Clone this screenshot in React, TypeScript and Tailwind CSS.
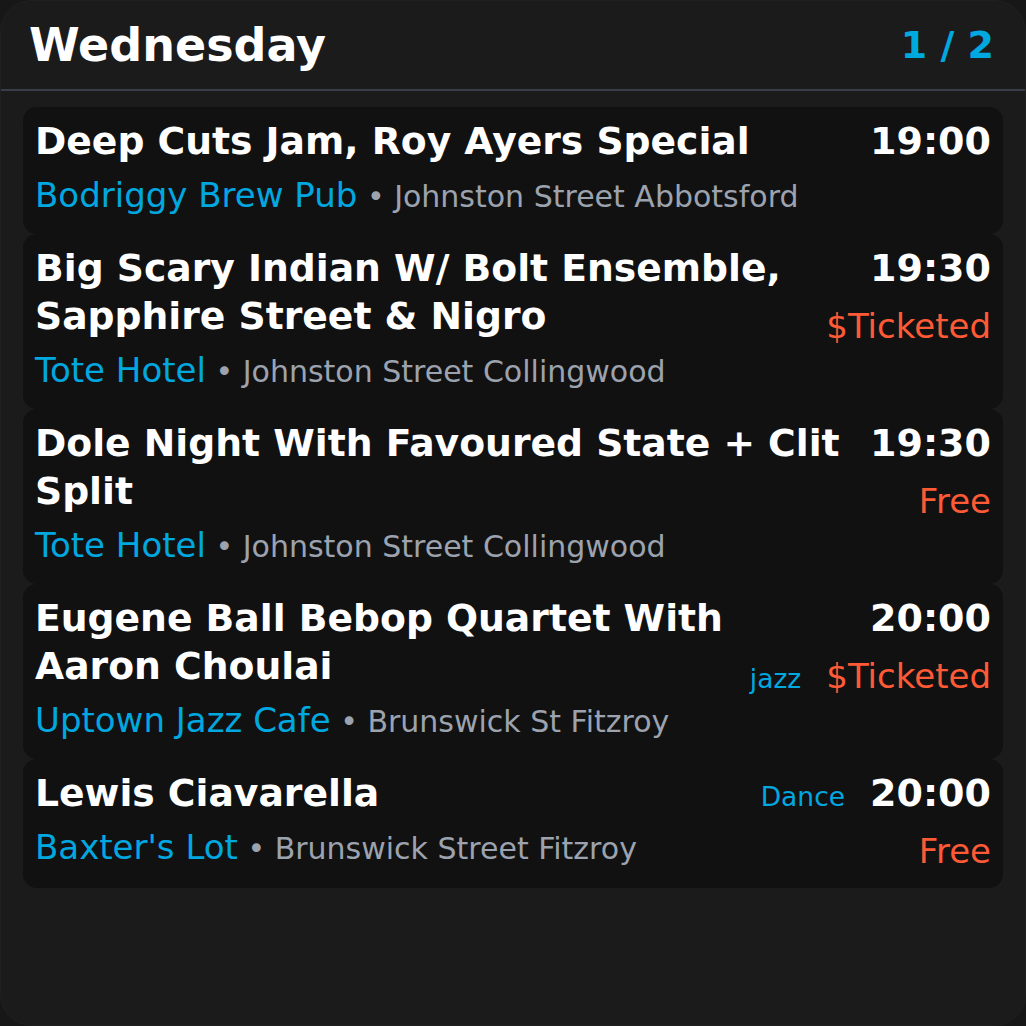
import React from "react";

type Ev = {
  title: string;
  venue: string;
  addr: string;
  time: string;
  price?: string;
  tag?: string;
  tagRow?: "time" | "price";
};

const events: Ev[] = [
  { title: "Deep Cuts Jam, Roy Ayers Special", venue: "Bodriggy Brew Pub", addr: "Johnston Street Abbotsford", time: "19:00" },
  { title: "Big Scary Indian W/ Bolt Ensemble, Sapphire Street & Nigro", venue: "Tote Hotel", addr: "Johnston Street Collingwood", time: "19:30", price: "$Ticketed" },
  { title: "Dole Night With Favoured State + Clit Split", venue: "Tote Hotel", addr: "Johnston Street Collingwood", time: "19:30", price: "Free" },
  { title: "Eugene Ball Bebop Quartet With Aaron Choulai", venue: "Uptown Jazz Cafe", addr: "Brunswick St Fitzroy", time: "20:00", price: "$Ticketed", tag: "jazz", tagRow: "price" },
  { title: "Lewis Ciavarella", venue: "Baxter's Lot", addr: "Brunswick Street Fitzroy", time: "20:00", price: "Free", tag: "Dance", tagRow: "time" },
];

function Card({ e }: { e: Ev }) {
  return (
    <div className="flex justify-between rounded-[14px] bg-[#111111] pl-[12px] pr-[12px] pt-[10px] pb-[17px]">
      <div className="flex min-w-0 flex-1 flex-col pb-[2px] pr-[20px]">
        <div className="text-[37.7px] font-bold leading-[48px] text-white">{e.title}</div>
        <div className="mt-[10px] flex h-[40px] items-baseline whitespace-nowrap leading-[40px]">
          <span className="text-[34px] text-[#00a8e0]">{e.venue}</span>
          <span className="whitespace-pre text-[30px] text-[#9ca3af]"> • {e.addr}</span>
        </div>
      </div>
      <div className="flex shrink-0 flex-col items-end">
        <div className="flex h-[48px] items-baseline gap-[25px] leading-[48px]">
          {e.tag && e.tagRow === "time" && (
            <span className="text-[26.5px] text-[#00a8e0]">{e.tag}</span>
          )}
          <span className="text-[38px] font-bold text-white">{e.time}</span>
        </div>
        {e.price && (
          <div className="mt-[14px] flex h-[40px] items-baseline gap-[25px] leading-[40px]">
            {e.tag && e.tagRow === "price" && (
              <span className="text-[26.5px] text-[#00a8e0]">{e.tag}</span>
            )}
            <span className="text-[34px] text-[#ff5a36]">{e.price}</span>
          </div>
        )}
      </div>
    </div>
  );
}

export default function App() {
  return (
    <div
      className="h-[1026px] w-[1026px] bg-[#171717]"
      style={{ fontFamily: '"DejaVu Sans", sans-serif' }}
    >
      <div className="h-full w-full overflow-hidden rounded-[32px] border border-[#202020] bg-[#1b1b1b]">
        <div className="flex h-[90px] items-center justify-between border-b-2 border-[#383d47] pl-[28px] pr-[31px]">
          <div className="text-[46px] font-bold text-white">Wednesday</div>
          <div className="text-[38px] font-bold text-[#00a8e0]">1 / 2</div>
        </div>
        <div className="flex flex-col px-[22px] pt-[16px]">
          {events.map((e, i) => (
            <Card key={i} e={e} />
          ))}
        </div>
      </div>
    </div>
  );
}
